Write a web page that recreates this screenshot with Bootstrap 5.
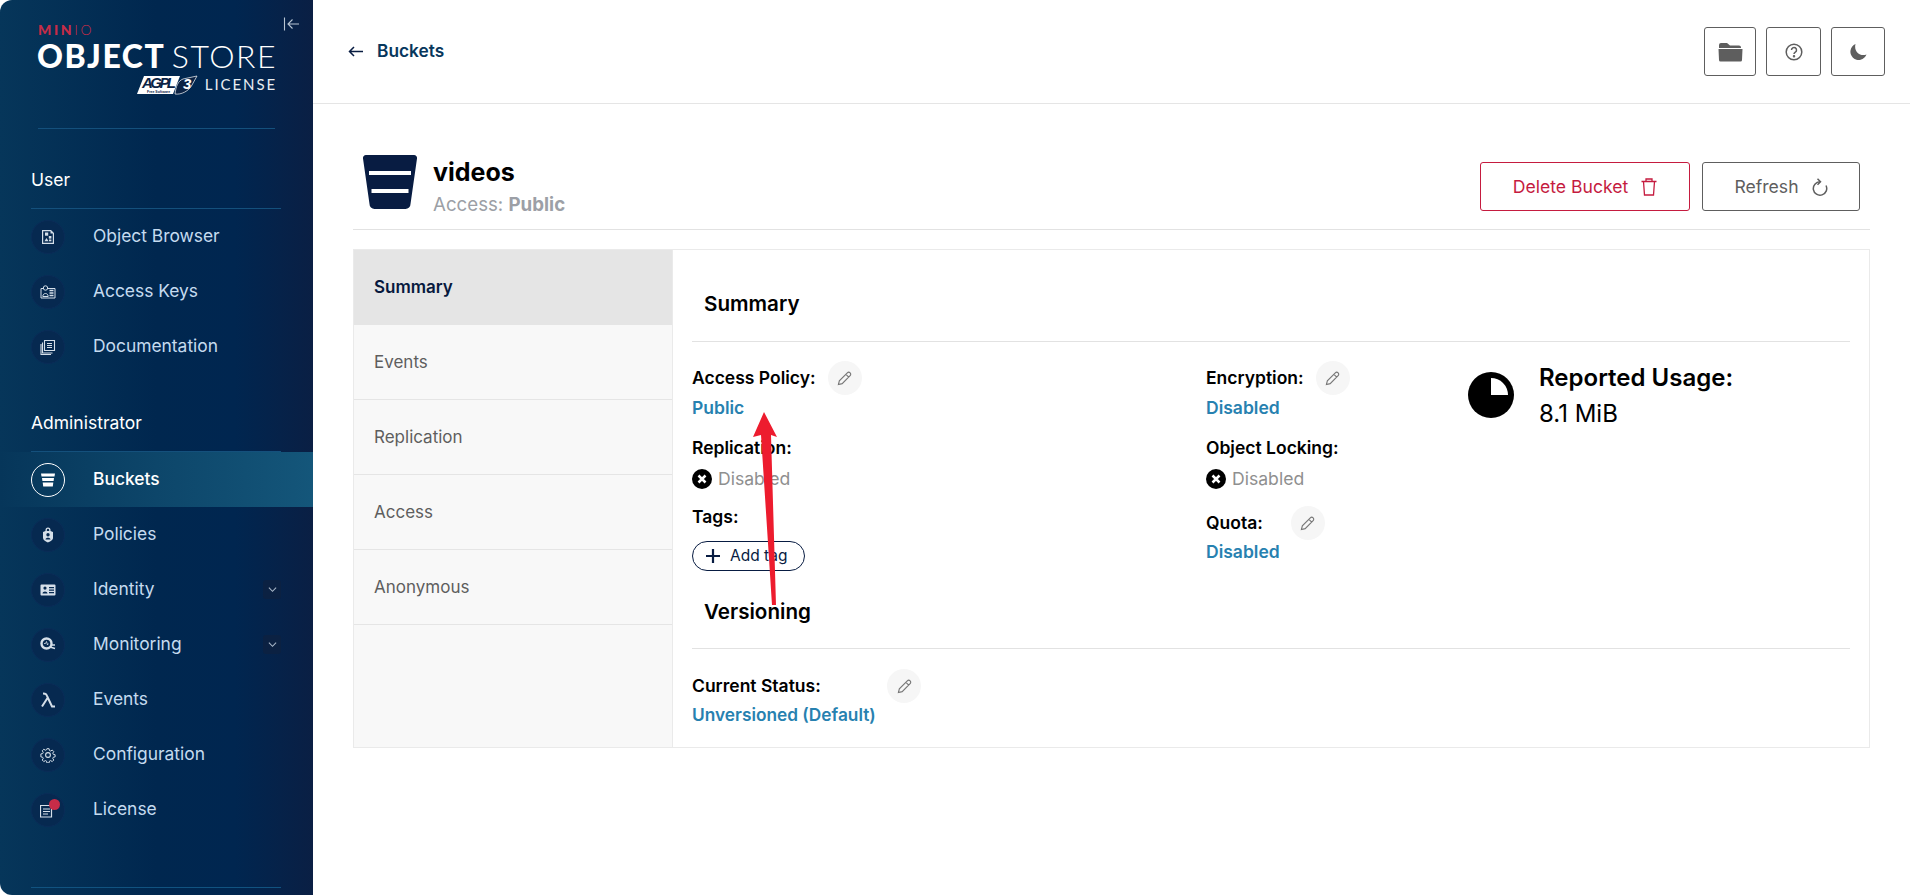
<!doctype html>
<html lang="en">
<head>
<meta charset="utf-8">
<title>MinIO Console - videos</title>
<link href="https://cdn.jsdelivr.net/npm/bootstrap@5.3.0/dist/css/bootstrap.min.css" rel="stylesheet">
<style>
html,body{height:100%;margin:0}
body{font-family:Inter,"Liberation Sans",sans-serif;background:#fff;color:#000;overflow:hidden}
.app-shell{height:895px;position:relative}
.side-pane{width:313px;height:895px;flex:none;background:linear-gradient(90deg,#06365a 0%,#00274f 50%,#002650 75%,#0a1f44 100%);border-radius:12px 0 0 12px;padding-top:24px;position:relative;color:#c5dbef}
.collapse-ico{position:absolute;left:283px;top:16px;width:17px;height:17px;color:#b9c6d3}
.logo-box{width:237px;margin-left:38px;height:104px;line-height:1}
.logo-minio{font-size:14px;font-weight:900;color:#c72c48;letter-spacing:2.6px;height:11px;line-height:11px;font-family:Lato,Inter,sans-serif;white-space:nowrap}
.logo-minio span{font-weight:300}
.logo-main{font-family:Lato,Inter,sans-serif;font-size:32px;line-height:32px;color:#fff;font-weight:900;white-space:nowrap;letter-spacing:1.5px;display:flex;justify-content:space-between;margin-top:5px;margin-left:-1px;margin-right:-2px}
.logo-main span{font-weight:300}
.logo-sub{display:flex;justify-content:space-between;align-items:center;margin-top:2px;margin-left:99px}
.logo-lic{font-size:15px;letter-spacing:1.9px;color:#e8edf2;font-family:Lato,Inter,sans-serif;margin-right:-2px}
.side-rule{height:1px;background:#14507c;margin:0 32px 0 31px}
.logo-rule{margin:0 38px;height:1px;background:#14507c}
.sec-head{font-size:17.5px;color:#fff;padding-left:31px;line-height:20px}
.nav-row{height:55px;display:flex;align-items:center;padding-left:31px;padding-right:32px;color:#c5dbef;font-size:17.4px;position:relative}
.nav-row.on{background:linear-gradient(90deg,#06365a 0%,#14567a 100%);color:#fff;font-weight:500}
.nav-disc{width:34px;height:34px;border-radius:50%;background:#062950;border:1px solid #0a2c58;display:flex;align-items:center;justify-content:center;margin-right:28px;flex:none;position:relative;color:#d5dfe9}
.on .nav-disc{background:transparent;border-color:#fff;color:#fff}
.nav-disc svg{width:16px;height:16px}
.red-dot{position:absolute;width:11px;height:11px;background:#c72c48;border-radius:50%;right:4px;top:5px}
.nav-chev{margin-left:auto;width:18px;height:19px;background:#0b2142;border-radius:3px;display:flex;align-items:center;justify-content:center;color:#a9b7c8}
.nav-chev svg{width:9px;height:9px}
.main-pane{flex:1;min-width:0}
.top-strip{height:104px;border-bottom:1px solid #e5e5e5;padding:27px 25px 0 35px}
.back-link{color:#07375c;font-weight:600;font-size:17.3px;height:48px}
.back-link svg{width:15px;height:11px;margin-right:14px;color:#081c42}
.sq-btn{height:49px;border:1px solid #5e5e5e;border-radius:3px;background:#fff;color:#5e5e5e;display:flex;align-items:center;justify-content:center;padding:0}
.sq-a{width:52px}.sq-b{width:55px}.sq-c{width:54px}
.page-body{padding:0 40px 0 40px}
.title-row{margin-top:51px;height:75px;margin-left:0;border-bottom:1px solid #e2e2e2;padding:0 10px 0 10px}
.title-text{padding-top:2px}
.title-name{font-size:25px;font-weight:700;line-height:30px}
.title-sub{font-size:18.7px;color:#9c9fa6;line-height:22px;margin-top:7px}
.act-btn{height:49px;border-radius:3px;background:#fff;font-size:17.6px;display:flex;align-items:center;justify-content:center;gap:13px;padding:1px 0 0}
.act-del{width:210px;border:1px solid #c51b3f;color:#c51b3f;margin-right:12px}
.act-ref{width:158px;border:1px solid #5e5e5e;color:#5e5e5e}
.panel-box{margin-top:19px;height:499px;border:1px solid #eaeaea}
.tab-col{width:319px;flex:none;background:#f8f8f8;border-right:1px solid #eaeaea}
.tab-row{height:75px;padding:1px 0 0 20px;display:flex;align-items:center;font-size:17px;color:#5e5e5e;border-bottom:1px solid #e5e5e5}
.tab-row.on{background:#e5e5e5;color:#07193e;font-weight:600}
.content-col{flex:1;padding:0 19px 0 19px;min-width:0}
.sub-title{font-size:20.6px;font-weight:600;line-height:24px;padding-left:12px;color:#000}
.sub-rule{height:1px;background:#e2e2e2}
.info-grid{display:grid;grid-template-columns:514px 254px 1fr}
.lbl{font-size:17.5px;font-weight:600;line-height:20px;white-space:nowrap;color:#000}
.val{font-size:17.5px;font-weight:600;line-height:20px;color:#2781b0}
.val-long{font-size:17.3px}
.pencil{width:34px;height:34px;border-radius:50%;background:#f6f6f6;display:flex;align-items:center;justify-content:center;color:#777;flex:none}
.pencil svg{width:15px;height:15px}
.lbl-row{height:34px;display:flex;align-items:center}
.off-row{height:20px;display:flex;align-items:center;color:#8f8f8f;font-size:17.6px;gap:6px}
.x-ico{width:20px;height:20px;flex:none}
.tag-pill{width:113px;height:30px;border:1px solid #081c42;border-radius:15px;color:#081c42;background:#fff;font-size:15.5px;display:flex;align-items:center;padding:0 0 0 13px;gap:10px}
.tag-pill svg{width:14px;height:14px}
.usage-box{padding-top:3px}
.usage-title{font-size:24px;font-weight:600;line-height:28px;white-space:nowrap}
.usage-val{font-size:24px;line-height:28px;margin-top:8px}
.arrow-note{position:absolute;left:0;top:0;pointer-events:none}
</style>
</head>
<body>
<div class="app-shell d-flex">
  <aside class="side-pane">
    <svg class="collapse-ico" viewBox="0 0 17 17" fill="none" stroke="currentColor" stroke-width="1.1"><path d="M1.5 1.5v13M16 8H5M9.500 3.500 5 8l4.500 4.500"/></svg>
    <div class="logo-box">
      <div class="logo-minio">MIN<span>IO</span></div>
      <div class="logo-main">OBJECT<span>STORE</span></div>
      <div class="logo-sub">
        <svg width="62" height="21" viewBox="0 0 62 21"><polygon points="0,20 7,2 43,2 36,20" fill="#fff"/><text x="5" y="13.500" font-family="Liberation Sans, sans-serif" font-size="15" font-style="italic" font-weight="700" fill="#0b2345" textLength="34">AGPL</text><text x="10" y="18.500" font-family="Liberation Sans, sans-serif" font-size="3.500" font-weight="700" fill="#0b2345">Free Software</text><path d="M38 20C44 21 52 17 55 11L60 2 46 5C41 7 39 12 38 20z" fill="#0b2345" stroke="#fff" stroke-width=".7"/><text x="46" y="15" font-family="Liberation Sans, sans-serif" font-size="15" font-style="italic" font-weight="700" fill="#fff">3</text></svg>
        <div class="logo-lic">LICENSE</div>
      </div>
    </div>
    <div class="logo-rule"></div>
    <div class="sec-head" style="margin-top:41px">User</div>
    <div class="side-rule" style="margin-top:18px"></div>
    <div class="nav-row">
      <span class="nav-disc"><svg viewBox="0 0 16 16" fill="currentColor"><path fill-rule="evenodd" d="M2 1h9l3 3v11H2zM3.200 2.200v11.600h9.600V4.500h-2.300V2.200z"/><rect x="5" y="3.500" width="3.200" height="3.200"/><rect x="8.800" y="7" width="2.600" height="2.600"/><path d="M4.500 12.300l2-3.200 2 3.200z"/><rect x="9" y="10.500" width="2.400" height="1.800"/></svg></span>Object Browser
    </div>
    <div class="nav-row">
      <span class="nav-disc"><svg viewBox="0 0 16 16" fill="none" stroke="currentColor" stroke-width="1"><path d="M3.500 4.500H1v9.500h14V4.500H8"/><circle cx="5.500" cy="4" r="2.200"/><path d="M2.800 12.500c0-4 5.400-4 5.400 0z"/><path d="M9.500 6.500h4M9.500 9h4M9.500 11.500h4" stroke-width="1.300"/></svg></span>Access Keys
    </div>
    <div class="nav-row">
      <span class="nav-disc"><svg viewBox="0 0 16 16" fill="none" stroke="currentColor" stroke-width="1.100"><path d="M4.500 1.500h10v10h-10zM7 4.500h5M7 6.500h5M7 8.500h5"/><path d="M2.500 3.500v10.500h10"/><path d="M1 5v10.500h10"/></svg></span>Documentation
    </div>
    <div class="sec-head" style="margin-top:39px">Administrator</div>
    <div class="side-rule" style="margin-top:18px"></div>
    <div class="nav-row on">
      <span class="nav-disc"><svg viewBox="0 0 16 16" fill="currentColor"><path d="M1 1.500h14l-.5 3H1.500zM2 6h12l-.4 3H2.400zM2.700 10.500h10.600l-.5 4H3.200z"/></svg></span>Buckets
    </div>
    <div class="nav-row">
      <span class="nav-disc"><svg viewBox="0 0 16 16" fill="currentColor"><path fill-rule="evenodd" d="M5.500 4V3a2.500 2.500 0 0 1 5 0v1l2.500 1v6c0 2-3 3.500-5 4.500-2-1-5-2.500-5-4.500V5zM6.800 4h2.400V3a1.200 1.200 0 0 0-2.400 0zM8 6a1.700 1.700 0 1 0 0 3.400A1.700 1.700 0 0 0 8 6zM5.500 12.500h5c0-2.400-5-2.400-5 0z"/></svg></span>Policies
    </div>
    <div class="nav-row">
      <span class="nav-disc"><svg viewBox="0 0 16 16" fill="currentColor"><path fill-rule="evenodd" d="M1.500 2.500h13a1 1 0 0 1 1 1v9a1 1 0 0 1-1 1h-13a1 1 0 0 1-1-1v-9a1 1 0 0 1 1-1zM5 4.500a1.600 1.600 0 1 0 0 3.200 1.600 1.600 0 0 0 0-3.200zM2.500 11.500h5c0-2.800-5-2.800-5 0zM9 5v1.200h5V5zM9 7.500v1.200h5V7.500zM9 10v1.200h5V10z"/></svg></span>Identity
      <span class="nav-chev"><svg viewBox="0 0 10 10" fill="none" stroke="currentColor" stroke-width="1.200"><path d="M1 3l4 4 4-4"/></svg></span>
    </div>
    <div class="nav-row">
      <span class="nav-disc"><svg viewBox="0 0 16 16" fill="none" stroke="currentColor"><circle cx="6.500" cy="6.500" r="5" stroke-width="2.400"/><path d="M4 6.500h1.500l1-2 1 3.500.7-1.500" stroke-width=".8"/><path d="M10 10l5 1.500M11 8h4" stroke-width="1.500"/></svg></span>Monitoring
      <span class="nav-chev"><svg viewBox="0 0 10 10" fill="none" stroke="currentColor" stroke-width="1.200"><path d="M1 3l4 4 4-4"/></svg></span>
    </div>
    <div class="nav-row">
      <span class="nav-disc"><svg viewBox="0 0 16 16" fill="none" stroke="currentColor" stroke-width="2"><path d="M3 1.500c3 0 3.500 1 4.500 3.500L12 14.500h3M7.500 6 2 14.500"/></svg></span>Events
    </div>
    <div class="nav-row">
      <span class="nav-disc"><svg viewBox="0 0 16 16" fill="none" stroke="currentColor" stroke-width="1.100"><circle cx="8" cy="8" r="2.400"/><path d="M6.800 1h2.400l.4 2 1.300.6 1.800-1.100 1.700 1.700-1.100 1.800.6 1.300 2 .4v2.400l-2 .4-.6 1.300 1.100 1.800-1.700 1.700-1.800-1.100-1.300.6-.4 2H6.800l-.4-2-1.300-.6-1.800 1.100-1.700-1.700 1.100-1.800-.6-1.300-2-.4V6.800l2-.4.6-1.300L1.600 3.300l1.700-1.700 1.800 1.100 1.300-.6z" transform="translate(.8 .8) scale(.9)"/></svg></span>Configuration
    </div>
    <div class="nav-row">
      <span class="nav-disc"><svg viewBox="0 0 16 16" fill="none" stroke="currentColor" stroke-width="1.200"><path d="M1.500 3.500h10V15h-11V3.500zM3 7h7M3 9.500h7M3 12h5"/></svg><span class="red-dot"></span></span>License
    </div>
    <div class="side-rule" style="margin-top:50px;background:#115380"></div>
  </aside>

  <main class="main-pane">
    <div class="top-strip d-flex justify-content-between">
      <div class="back-link d-flex align-items-center"><svg viewBox="0 0 15 11" fill="none" stroke="currentColor" stroke-width="1.500"><path d="M15 5.500H1.500M6 1 1.500 5.500 6 10"/></svg>Buckets</div>
      <div class="d-flex align-items-start" style="gap:10px">
        <button class="sq-btn sq-a" type="button" aria-label="Files"><svg width="25" height="21" viewBox="0 0 25 21" fill="currentColor"><path d="M1 4a2 2 0 0 1 2-2h6l3 2.500h9a2 2 0 0 1 2 2V7H1z"/><path d="M.5 8h24l-.5 11a1.500 1.500 0 0 1-1.500 1.500h-20A1.500 1.500 0 0 1 1 19z"/></svg></button>
        <button class="sq-btn sq-b" type="button" aria-label="Help"><svg width="18" height="18" viewBox="0 0 18 18" fill="none" stroke="currentColor" stroke-width="1.500"><circle cx="9" cy="9" r="7.800"/><path d="M6.500 7a2.500 2.500 0 1 1 3.800 2.100c-.9.600-1.300 1-1.300 2"/><circle cx="9" cy="13.200" r=".5" fill="currentColor"/></svg></button>
        <button class="sq-btn sq-c" type="button" aria-label="Theme"><svg width="18" height="18" viewBox="0 0 18 18" fill="currentColor"><path d="M6.500 1a8.300 8.300 0 1 0 11 10.500C11 14 4.500 8.500 6.500 1z"/></svg></button>
      </div>
    </div>

    <div class="page-body">
      <div class="title-row d-flex align-items-start justify-content-between">
        <div class="d-flex">
          <svg width="54" height="54" viewBox="0 0 54 54" fill="#081c42" style="margin-right:16px"><path d="M3 0h48a3 3 0 0 1 3 3.400L47.500 49a5 5 0 0 1-5 5h-31a5 5 0 0 1-5-5L0 3.400A3 3 0 0 1 3 0z"/><rect x="6" y="16" width="42" height="4" fill="#fff"/><rect x="8.500" y="34" width="37" height="4" fill="#fff"/></svg>
          <div class="title-text">
            <div class="title-name">videos</div>
            <div class="title-sub">Access: <b>Public</b></div>
          </div>
        </div>
        <div class="d-flex" style="margin-top:7px">
          <button class="act-btn act-del" type="button">Delete Bucket <svg width="16" height="18" viewBox="0 0 16 18" fill="none" stroke="currentColor" stroke-width="1.300"><path d="M.5 3.500h15M5 3.500V1h6v2.500M2.500 3.500 3.500 17h9l1-13.500"/></svg></button>
          <button class="act-btn act-ref" type="button">Refresh <svg width="16" height="18" viewBox="0 0 16 18" fill="none" stroke="currentColor" stroke-width="1.500"><path d="M8 3.800A6.700 6.700 0 1 0 14 7.500"/><path d="M5.500 .8 8.500 3.800 5.500 6.800"/></svg></button>
        </div>
      </div>

      <div class="panel-box d-flex">
        <div class="tab-col">
          <div class="tab-row on">Summary</div>
          <div class="tab-row">Events</div>
          <div class="tab-row">Replication</div>
          <div class="tab-row">Access</div>
          <div class="tab-row">Anonymous</div>
        </div>
        <div class="content-col">
          <div class="sub-title" style="margin-top:42px">Summary</div>
          <div class="sub-rule" style="margin-top:25px"></div>
          <div class="info-grid" style="margin-top:19px">
            <div>
              <div class="lbl-row"><span class="lbl" style="margin-right:12px">Access Policy:</span><span class="pencil"><svg viewBox="0 0 16 16" fill="none" stroke="currentColor" stroke-width="1.200"><path d="M1.500 14.500 2.500 10.500 11 2a2 2 0 0 1 3 3l-8.500 8.500zM9.500 3.500l3 3"/></svg></span></div>
              <div class="val" style="margin-top:3px">Public</div>
              <div class="lbl" style="margin-top:20px">Replication:</div>
              <div class="off-row" style="margin-top:11px"><svg class="x-ico" viewBox="0 0 20 20"><circle cx="10" cy="10" r="10" fill="#000"/><path d="M6.500 6.500l7 7M13.500 6.500l-7 7" stroke="#fff" stroke-width="2.500"/></svg>Disabled</div>
              <div class="lbl" style="margin-top:18px">Tags:</div>
              <div class="tag-pill" style="margin-top:14px"><svg viewBox="0 0 14 14" stroke="currentColor" stroke-width="2.200"><path d="M7 0v14M0 7h14"/></svg>Add tag</div>
            </div>
            <div>
              <div class="lbl-row"><span class="lbl" style="margin-right:12px">Encryption:</span><span class="pencil"><svg viewBox="0 0 16 16" fill="none" stroke="currentColor" stroke-width="1.200"><path d="M1.500 14.500 2.500 10.500 11 2a2 2 0 0 1 3 3l-8.500 8.500zM9.500 3.500l3 3"/></svg></span></div>
              <div class="val" style="margin-top:3px">Disabled</div>
              <div class="lbl" style="margin-top:20px">Object Locking:</div>
              <div class="off-row" style="margin-top:11px"><svg class="x-ico" viewBox="0 0 20 20"><circle cx="10" cy="10" r="10" fill="#000"/><path d="M6.500 6.500l7 7M13.500 6.500l-7 7" stroke="#fff" stroke-width="2.500"/></svg>Disabled</div>
              <div class="lbl-row" style="margin-top:17px"><span class="lbl" style="margin-right:28px">Quota:</span><span class="pencil"><svg viewBox="0 0 16 16" fill="none" stroke="currentColor" stroke-width="1.200"><path d="M1.500 14.500 2.500 10.500 11 2a2 2 0 0 1 3 3l-8.500 8.500zM9.500 3.500l3 3"/></svg></span></div>
              <div class="val" style="margin-top:2px">Disabled</div>
            </div>
            <div class="d-flex">
              <svg width="46" height="46" viewBox="0 0 46 46" style="margin-left:8px;margin-top:11px;margin-right:25px;flex:none"><circle cx="23" cy="23" r="23" fill="#000"/><path d="M23 6a17 17 0 0 1 17 17H23z" fill="#fff"/></svg>
              <div class="usage-box"><div class="usage-title">Reported Usage:</div><div class="usage-val">8.1 MiB</div></div>
            </div>
          </div>
          <div class="sub-title" style="margin-top:29px">Versioning</div>
          <div class="sub-rule" style="margin-top:24px"></div>
          <div class="lbl-row" style="margin-top:20px"><span class="lbl" style="width:195px">Current Status:</span><span class="pencil"><svg viewBox="0 0 16 16" fill="none" stroke="currentColor" stroke-width="1.200"><path d="M1.500 14.500 2.500 10.500 11 2a2 2 0 0 1 3 3l-8.500 8.500zM9.500 3.500l3 3"/></svg></span></div>
          <div class="val val-long" style="margin-top:2px">Unversioned (Default)</div>
        </div>
      </div>
    </div>
  </main>
  <svg class="arrow-note" width="1910" height="895" viewBox="0 0 1910 895"><polygon points="764,412 777,437 771,435 776,605 772,605 761,435 753,437" fill="#ed1c2e"/></svg>
</div>
<script src="https://cdn.jsdelivr.net/npm/bootstrap@5.3.0/dist/js/bootstrap.bundle.min.js"></script>
</body>
</html>
